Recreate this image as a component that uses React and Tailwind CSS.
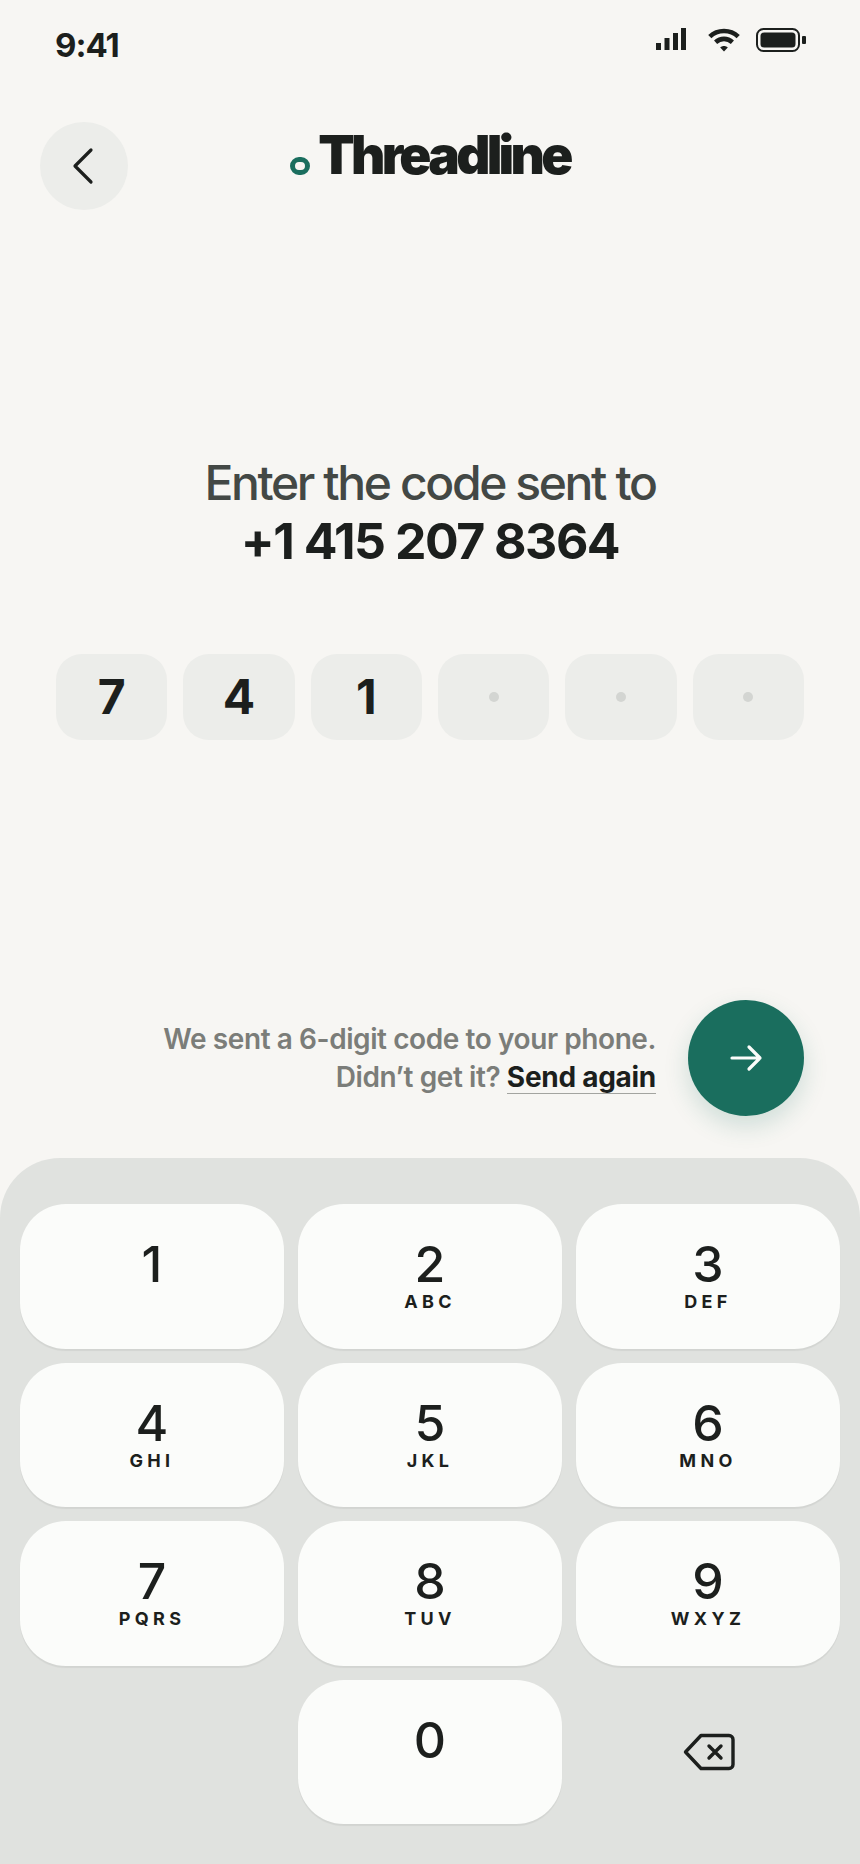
const KEYS = [
  ['1', ''], ['2', 'ABC'], ['3', 'DEF'],
  ['4', 'GHI'], ['5', 'JKL'], ['6', 'MNO'],
  ['7', 'PQRS'], ['8', 'TUV'], ['9', 'WXYZ'],
];
const CODE = ['7', '4', '1', '', '', ''];

function Key({ digit, letters }) {
  return (
    <button className="flex h-[144.5px] flex-col items-center rounded-[46px] bg-[#fbfcfa] pt-[30px] shadow-[0_2px_1px_rgba(0,0,0,0.06)]">
      <span className="text-[50px] leading-[60px] font-[450] text-[#1c1f1d]">{digit}</span>
      {letters && (
        <span className="mt-[-3px] text-[18px] leading-[22px] font-bold tracking-[0.24em] text-[#1c1f1d]">{letters}</span>
      )}
    </button>
  );
}

export default function App() {
  return (
    <div className="flex h-[1864px] w-[860px] flex-col overflow-hidden bg-[#f7f6f3] font-['Inter',sans-serif] text-[#1c1f1d]">
      {/* Status bar */}
      <div className="flex h-[122px] items-start justify-between pl-[55px] pr-[54px]">
        <span className="mt-[25px] text-[33px] leading-[40px] font-bold tracking-[-0.03em]">9:41</span>
        <div className="mt-[28px] flex items-start">
          <svg width="30" height="22" viewBox="0 0 30 22" fill="#1c1f1d">
            <rect x="0" y="15" width="5" height="7" />
            <rect x="8.5" y="10" width="5" height="12" />
            <rect x="17" y="5" width="5" height="17" />
            <rect x="25" y="0" width="5" height="22" />
          </svg>
          <svg className="ml-[22px]" width="32" height="24" viewBox="0 0 32 24" fill="none" stroke="#1c1f1d" strokeWidth="4.6">
            <path d="M1.8 8.6C9.6 1.2 22.4 1.2 30.2 8.6" />
            <path d="M7.6 14.2C12.4 9.8 19.6 9.8 24.4 14.2" />
            <path d="M12.2 19.4L16 23.4L19.8 19.4C17.6 17.4 14.4 17.4 12.2 19.4Z" fill="#1c1f1d" stroke="none" />
          </svg>
          <svg className="ml-[16px]" width="50" height="24" viewBox="0 0 50 24" fill="none">
            <rect x="1" y="1" width="42" height="22" rx="6.5" stroke="#1c1f1d" strokeWidth="2" />
            <rect x="4.5" y="4.5" width="35" height="15" rx="3.5" fill="#1c1f1d" />
            <rect x="46" y="8" width="4" height="8" rx="1" fill="#1c1f1d" />
          </svg>
        </div>
      </div>

      {/* Header */}
      <div className="relative flex h-[88px] items-center justify-center pb-[22px]">
        <button className="absolute left-[40px] top-0 flex h-[88px] w-[88px] items-center justify-center rounded-full bg-[#ecedea]">
          <svg className="mr-[2px]" width="24" height="38" viewBox="0 0 24 38" fill="none" stroke="#1c1f1d" strokeWidth="3.2" strokeLinecap="round" strokeLinejoin="round">
            <path d="M20 3L4 19L20 35" />
          </svg>
        </button>
        <div className="flex items-end">
          <span className="mb-[12px] h-[18px] w-[20px] rounded-full border-[5px] border-[#1a6e5e]" />
          <span className="ml-[8px] text-[53px] leading-[64px] font-black tracking-[-0.07em]">Threadline</span>
        </div>
      </div>

      {/* Prompt */}
      <div className="mt-[244px] text-center leading-[58px]">
        <div className="text-[48px] font-medium tracking-[-0.05em] text-[#434845]">Enter the code sent to</div>
        <div className="text-[50px] font-bold tracking-[-0.03em]">+1 415 207 8364</div>
      </div>

      {/* Code boxes */}
      <div className="mt-[84px] flex gap-[16px] px-[56px]">
        {CODE.map((c, i) => (
          <div key={i} className="flex h-[86px] flex-1 items-center justify-center rounded-[26px] bg-[#ecedea]">
            {c ? (
              <span className="text-[48px] leading-none font-bold">{c}</span>
            ) : (
              <span className="h-[10px] w-[10px] rounded-full bg-[#d3d5d2]" />
            )}
          </div>
        ))}
      </div>

      {/* Resend row */}
      <div className="mt-[260px] flex items-center justify-end gap-[32px] pr-[56px]">
        <p className="text-right text-[28px] leading-[38px] font-semibold tracking-[-0.015em] text-[#7b7d79]">
          We sent a 6-digit code to your phone.
          <br />
          Didn’t get it?{' '}
          <span className="inline-block border-b border-[#a3a4a0] leading-[32px] font-bold tracking-[-0.01em] text-[#1c1f1d]">Send again</span>
        </p>
        <button className="flex h-[116px] w-[116px] items-center justify-center rounded-full bg-[#1a6e5e] shadow-[0_10px_24px_rgba(26,110,94,0.18)]">
          <svg width="36" height="28" viewBox="0 0 36 28" fill="none" stroke="#fbfcfa" strokeWidth="3.2" strokeLinecap="round" strokeLinejoin="round">
            <path d="M4 14H32M21 3L32 14L21 25" />
          </svg>
        </button>
      </div>

      {/* Keypad */}
      <div className="mt-[42px] flex-1 rounded-t-[60px] bg-[#e0e2df] px-[20px] pt-[46px]">
        <div className="grid grid-cols-3 gap-[14px]">
          {KEYS.map(([d, l]) => (
            <Key key={d} digit={d} letters={l} />
          ))}
          <div />
          <Key digit="0" letters="" />
          <div className="flex items-center justify-center">
            <svg className="ml-[2px]" width="52" height="38" viewBox="0 0 52 38" fill="none" stroke="#1c1f1d" strokeWidth="3.4" strokeLinecap="round" strokeLinejoin="round">
              <path d="M18 2.5H46A4 4 0 0 1 50 6.5V31.5A4 4 0 0 1 46 35.5H18L2.5 19Z" />
              <path d="M26 13L38 25M38 13L26 25" />
            </svg>
          </div>
        </div>
      </div>
    </div>
  );
}
